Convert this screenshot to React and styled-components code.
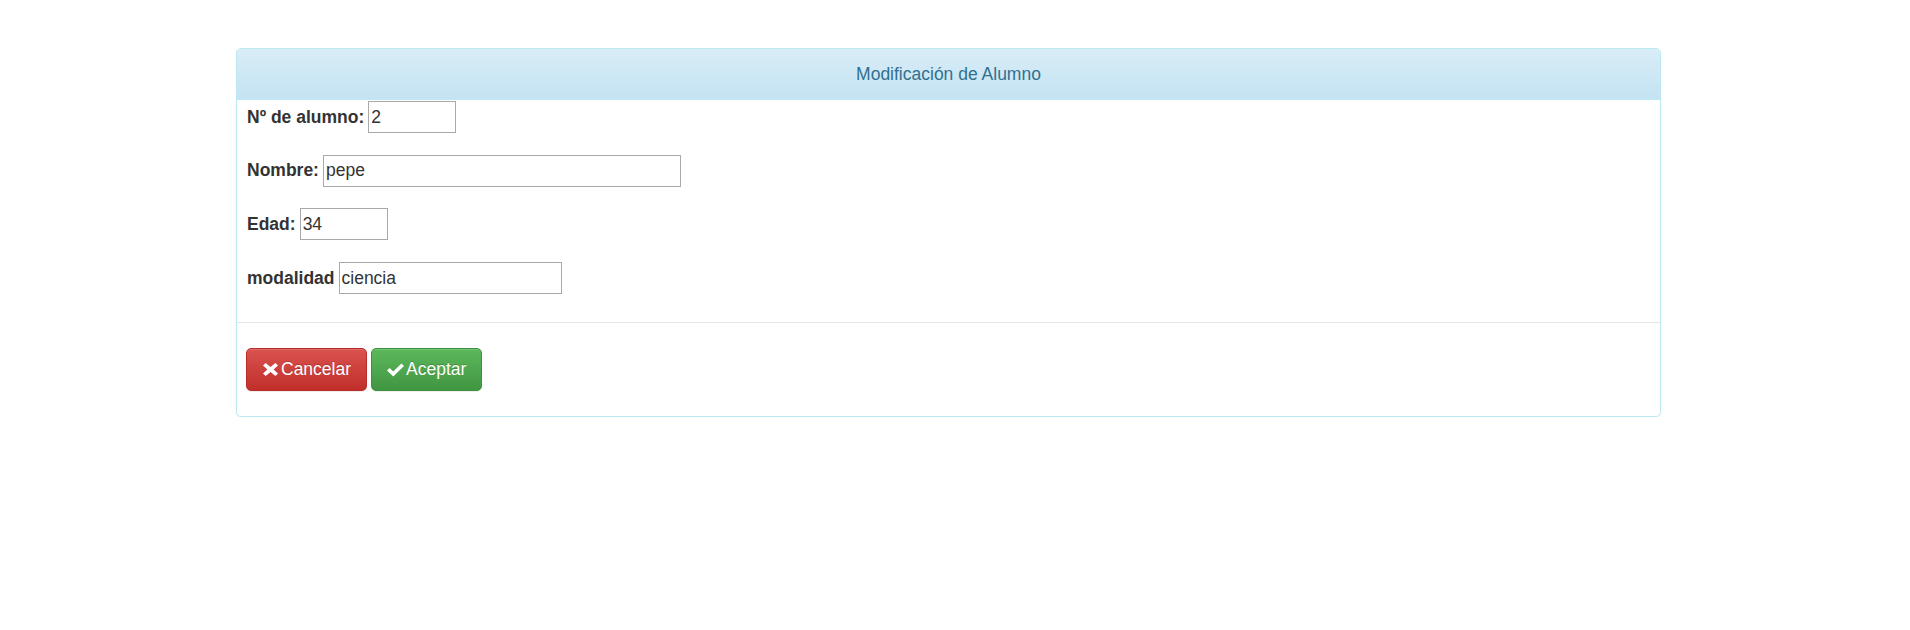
import React from "react";
import styled, { createGlobalStyle } from "styled-components";

const Global = createGlobalStyle`
  html, body { margin: 0; padding: 0; background: #fff; }
  body {
    font-family: "Liberation Sans", Arial, Helvetica, sans-serif;
    font-size: 17.5px;
    line-height: 25px;
    color: #333;
  }
  * { box-sizing: border-box; }
`;

const Page = styled.div`
  padding: 48px 0 0 236px;
`;

const Panel = styled.div`
  width: 1425px;
  background: #fff;
  border: 1px solid #bce8f1;
  border-radius: 5px;
  box-shadow: 0 1px 2px rgba(0, 0, 0, 0.05);
`;

const Heading = styled.div`
  padding: 12.5px 15px;
  line-height: 25px;
  text-align: center;
  color: #31708f;
  background-image: linear-gradient(to bottom, #d9edf7 0%, #c4e3f3 100%);
  border-bottom: 1px solid #bce8f1;
  border-radius: 4px 4px 0 0;
`;

const Body = styled.div`
  display: flex;
  flex-direction: column;
  gap: 21.7px;
  padding: 1px 10px 28px;
`;

const Row = styled.div`
  display: flex;
  align-items: baseline;
  gap: 4px;
  height: 32px;
`;

const Label = styled.label`
  font-weight: bold;
  color: #333;
`;

const Input = styled.input`
  width: ${(p) => p.$w}px;
  height: 32px;
  padding: 1px 2px;
  font-family: inherit;
  font-size: 17.5px;
  color: #333;
  border: 1px solid #a9a9a9;
  background: #fff;
  outline: none;
`;

const Footer = styled.div`
  display: flex;
  gap: 4px;
  padding: 25px 9px 25px;
  border-top: 1px solid #e5e5e5;
`;

const Button = styled.button`
  display: inline-flex;
  align-items: center;
  height: 43px;
  padding: 0 15px;
  font-family: inherit;
  font-size: 17.5px;
  color: #fff;
  text-shadow: 0 -1px 0 rgba(0, 0, 0, 0.2);
  border-radius: 5px;
  border: 1px solid ${(p) => (p.$variant === "danger" ? "#b92c28" : "#3e8f3e")};
  background-image: ${(p) =>
    p.$variant === "danger"
      ? "linear-gradient(to bottom, #d9534f 0%, #c12e2a 100%)"
      : "linear-gradient(to bottom, #5cb85c 0%, #419641 100%)"};
  box-shadow: inset 0 1px 0 rgba(255, 255, 255, 0.15), 0 1px 1px rgba(0, 0, 0, 0.075);
  cursor: pointer;
`;

const Icon = styled.svg`
  flex: none;
  margin-right: 2px;
`;

const RemoveIcon = () => (
  <Icon width="17" height="13" viewBox="0 0 17 13">
    <polygon
      points="1,2.6 3.6,0 8.5,4 13.4,0 16,2.6 11.6,6.5 16,10.4 13.4,13 8.5,9 3.6,13 1,10.4 5.4,6.5"
      fill="#fff"
    />
  </Icon>
);

const OkIcon = () => (
  <Icon width="17" height="14" viewBox="0 0 17 14">
    <polygon points="0,7.6 2.6,5 6.3,8.6 14.4,0.4 17,3 6.3,13.6" fill="#fff" />
  </Icon>
);

const fields = [
  { label: "Nº de alumno:", value: "2", w: 88 },
  { label: "Nombre:", value: "pepe", w: 358 },
  { label: "Edad:", value: "34", w: 88 },
  { label: "modalidad", value: "ciencia", w: 223 },
];

export default function App() {
  return (
    <>
      <Global />
      <Page>
        <Panel>
          <Heading>Modificación de Alumno</Heading>
          <Body>
            {fields.map((f) => (
              <Row key={f.label}>
                <Label>{f.label}</Label>
                <Input $w={f.w} defaultValue={f.value} />
              </Row>
            ))}
          </Body>
          <Footer>
            <Button $variant="danger">
              <RemoveIcon />
              Cancelar
            </Button>
            <Button $variant="success">
              <OkIcon />
              Aceptar
            </Button>
          </Footer>
        </Panel>
      </Page>
    </>
  );
}
